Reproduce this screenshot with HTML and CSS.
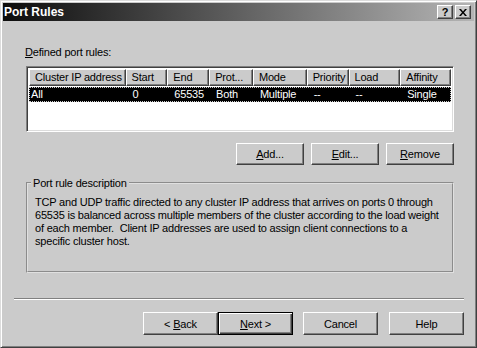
FILE: index.html
```html
<!DOCTYPE html>
<html lang="en">
<head>
    <meta charset="UTF-8">
    <title>Port Rules</title>
    <link rel="stylesheet" href="styles.css">
</head>
<body>
    <div class="window">
        <div class="titlebar">
            <span class="title">Port Rules</span>
            <div class="caption-btns">
                <span class="cap-btn">?</span>
                <span class="cap-btn">
                    <svg width="8" height="7" viewBox="0 0 8 7"><path d="M0 0h2l2 2.5 2-2.5h2l-3 3.5 3 3.5h-2l-2-2.5-2 2.5h-2l3-3.5z" fill="#000"/></svg>
                </span>
            </div>
        </div>

        <div class="dialog">
            <div class="caption"><u>D</u>efined port rules:</div>

            <div class="listview">
                <div class="list-head">
                    <span class="col c1">Cluster IP address</span>
                    <span class="col c2">Start</span>
                    <span class="col c3">End</span>
                    <span class="col c4">Prot...</span>
                    <span class="col c5">Mode</span>
                    <span class="col c6">Priority</span>
                    <span class="col c7">Load</span>
                    <span class="col c8">Affinity</span>
                </div>
                <div class="list-row selected">
                    <span class="col c1">All</span>
                    <span class="col c2">0</span>
                    <span class="col c3">65535</span>
                    <span class="col c4">Both</span>
                    <span class="col c5">Multiple</span>
                    <span class="col c6">--</span>
                    <span class="col c7">--</span>
                    <span class="col c8">Single</span>
                </div>
            </div>

            <div class="list-actions">
                <button class="btn"><u>A</u>dd...</button>
                <button class="btn"><u>E</u>dit...</button>
                <button class="btn"><u>R</u>emove</button>
            </div>

            <fieldset class="group">
                <legend>Port rule description</legend>
                <p>TCP and UDP traffic directed to any cluster IP address that arrives on ports 0 through 65535 is balanced across multiple members of the cluster according to the load weight of each member.&nbsp; Client IP addresses are used to assign client connections to a specific cluster host.</p>
            </fieldset>

            <hr class="separator">

            <div class="wizard-buttons">
                <button class="btn wide">&lt; <u>B</u>ack</button>
                <button class="btn wide default"><u>N</u>ext &gt;</button>
                <button class="btn wide cancel">Cancel</button>
                <button class="btn wide help">Help</button>
            </div>
        </div>
    </div>
</body>
</html>
```

FILE: styles.css
```css
body {
    margin: 0;
    background: #cbcbcb;
    font-family: 'Liberation Sans', Arial, sans-serif;
    font-size: 11px;
    letter-spacing: -0.2px;
    color: #000;
}

.window {
    width: 477px;
    height: 348px;
    box-sizing: border-box;
    padding: 2px;
    border: 1px solid;
    border-color: #dcdcdc #404040 #404040 #dcdcdc;
    box-shadow: inset 1px 1px #fff, inset -1px -1px #808080;
    display: flex;
    flex-direction: column;
}

.titlebar {
    height: 18px;
    display: flex;
    align-items: center;
    justify-content: space-between;
    padding: 0 3px 0 1px;
    background: linear-gradient(to right, #0c0c0c, #b4b4b4);
}

.title {
    color: #fff;
    font-weight: bold;
    font-size: 12px;
    letter-spacing: 0;
}

.caption-btns {
    display: flex;
    gap: 2px;
}

.cap-btn {
    width: 16px;
    height: 14px;
    box-sizing: border-box;
    display: flex;
    align-items: center;
    justify-content: center;
    background: #cbcbcb;
    border: 1px solid;
    border-color: #fff #404040 #404040 #fff;
    box-shadow: inset -1px -1px #808080;
    font-weight: bold;
    font-size: 11px;
    line-height: 1;
}

.dialog {
    flex: 1;
    display: flex;
    flex-direction: column;
    padding: 24px 20px 0 23px;
}

.caption {
    line-height: 14px;
    margin-left: -1px;
}

.listview {
    margin-top: 7px;
    height: 66px;
    box-sizing: border-box;
    border: 1px solid;
    border-color: #808080 #fff #fff #808080;
    box-shadow: inset 1px 1px #404040, inset -1px -1px #dcdcdc;
    background: #fff;
    padding: 2px;
}

.list-head, .list-row {
    display: flex;
}

.list-head .col {
    height: 17px;
    box-sizing: border-box;
    padding-left: 5px;
    line-height: 15px;
    background: #cbcbcb;
    border: 1px solid;
    border-color: #fff #404040 #404040 #fff;
    box-shadow: inset -1px -1px #808080;
    white-space: nowrap;
    overflow: hidden;
}

.c1 { width: 97px; }
.c2 { width: 42px; }
.c3 { width: 42px; }
.c4 { width: 44px; }
.c5 { width: 54px; }
.c6 { width: 42px; }
.c7 { width: 52px; }
.c8 { width: 51px; }

.list-row {
    margin-top: 1px;
    height: 15px;
    line-height: 14px;
}

.list-row .col {
    padding-left: 7px;
    box-sizing: border-box;
}

.list-row .c1 {
    padding-left: 2px;
}

.list-row.selected {
    background: #000;
    color: #fff;
    outline: 1px dotted #cbcbcb;
    outline-offset: -1px;
}

.list-actions {
    display: flex;
    justify-content: flex-end;
    gap: 7px;
    margin-top: 11px;
}

.btn {
    width: 68px;
    height: 22px;
    box-sizing: border-box;
    padding: 0;
    font-family: inherit;
    font-size: 11px;
    letter-spacing: -0.2px;
    color: #000;
    background: #cbcbcb;
    border: 1px solid;
    border-color: #fff #404040 #404040 #fff;
    box-shadow: inset -1px -1px #808080;
}

.btn.wide {
    width: 75px;
    height: 23px;
}

.btn.default {
    border: 1px solid #000;
    box-shadow: inset 1px 1px #fff, inset -1px -1px #404040, inset -2px -2px #808080;
}

.btn.cancel {
    margin-left: 10px;
}

.btn.help {
    margin-left: 11px;
}

.group {
    margin: 11px 0 0;
    padding: 0 7px 23px;
    border: 2px groove #e0e0e0;
    min-width: 0;
}

.group legend {
    padding: 0 2px;
    margin-left: -4px;
    line-height: 14px;
}

.group p {
    margin: 6px 0 0;
    line-height: 13px;
}

.separator {
    margin: 25px -10px 0 -12px;
    border: 0;
    border-top: 1px solid #808080;
    border-bottom: 1px solid #fff;
    height: 0;
}

.wizard-buttons {
    display: flex;
    justify-content: flex-end;
    margin: 12px -10px 0 0;
}
```
